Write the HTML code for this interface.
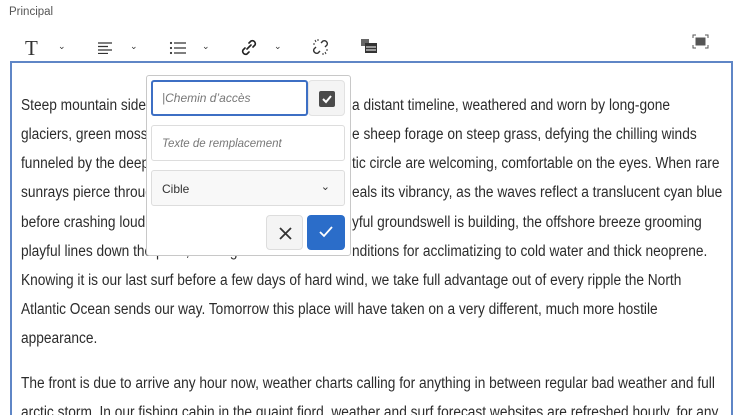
<!DOCTYPE html>
<html><head><style>
html,body{margin:0;width:750px;height:415px;overflow:hidden}
body{background:#fff;font-family:"Liberation Sans",sans-serif;position:relative}
.lbl{position:absolute;left:9px;top:6px;font-size:11.5px;color:#555}
.ed{position:absolute;left:10px;top:61px;width:723px;height:365px;border:2px solid #5f86c6;box-sizing:border-box}
.l{position:absolute;left:21px;white-space:nowrap;font-size:15.5px;color:#2c2c2c;transform:scaleX(0.885);transform-origin:0 50%;line-height:20px}
.r{left:352px;background:#fff}
.tb{position:absolute;top:36px;font-size:12px;color:#333}
.pop{position:absolute;left:146px;top:75px;width:205px;height:181px;background:#fff;border:1.5px solid #c8c8c8;border-radius:3px;box-sizing:border-box}
.in{position:absolute;background:#fff;border:1px solid #ddd;border-radius:3px;box-sizing:border-box;font-style:italic;font-size:12px;color:#777}
.btn{position:absolute;border-radius:4px;box-sizing:border-box}
</style></head><body>
<div class="lbl">Principal</div>
<div class="tb" style="left:25px;top:36px;font-family:'Liberation Serif',serif;font-size:21px">T</div>
<div class="tb" style="left:58px;top:41px;font-size:9px">⌄</div>
<svg class="tb" style="left:97px;top:42px" width="16" height="12"><path d="M1 1h14M1 4.5h10M1 8h14M1 11.5h10" stroke="#333" stroke-width="1.3"/></svg>
<div class="tb" style="left:130px;top:41px;font-size:9px">⌄</div>
<svg class="tb" style="left:169px;top:41px" width="18" height="14"><path d="M5 2h12M5 7h12M5 12h12" stroke="#333" stroke-width="1.3"/><circle cx="2" cy="2" r="1.1" fill="#333"/><circle cx="2" cy="7" r="1.1" fill="#333"/><circle cx="2" cy="12" r="1.1" fill="#333"/></svg>
<div class="tb" style="left:202px;top:41px;font-size:9px">⌄</div>
<svg class="tb" style="left:240px;top:39px" width="18" height="17"><path d="M7 10l4-4M9 4l2-2a3 3 0 0 1 4 4l-2 2M9 13l-2 2a3 3 0 0 1-4-4l2-2" stroke="#222" stroke-width="1.6" fill="none" stroke-linecap="round"/></svg>
<div class="tb" style="left:274px;top:41px;font-size:9px">⌄</div>
<svg class="tb" style="left:312px;top:38px" width="18" height="18"><path d="M9 5l2-2a3 3 0 0 1 4 4l-2 2M8 13l-2 2a3 3 0 0 1-4-4l2-2" stroke="#333" stroke-width="1.4" fill="none"/><path d="M3 2l1 2M6 1v2M1 6h2M14 16l-1-2M11 17v-2M16 12h-2" stroke="#333" stroke-width="1"/></svg>
<svg class="tb" style="left:360px;top:38px" width="18" height="16"><rect x="1" y="1" width="8" height="7" fill="#666"/><rect x="5" y="5" width="12" height="10" fill="#333"/><path d="M6 9h10M6 12h10" stroke="#fff"/></svg>
<svg class="tb" style="left:692px;top:34px" width="17" height="15"><path d="M1 4V1h3M13 1h3v3M16 11v3h-3M4 14H1v-3" stroke="#555" fill="none"/><rect x="3.5" y="3.5" width="10" height="8" fill="#555"/></svg>
<div class="ed"></div>
<div class="l" style="top:96px">Steep mountain sides rising up from the sea,</div>
<div class="l r" style="top:96px">a distant timeline, weathered and worn by long-gone</div>
<div class="l" style="top:125px">glaciers, green moss covers the rocks and th</div>
<div class="l r" style="top:125px">e sheep forage on steep grass, defying the chilling winds</div>
<div class="l" style="top:154px">funneled by the deep fjord. The tones of the arc</div>
<div class="l r" style="top:154px">tic circle are welcoming, comfortable on the eyes. When rare</div>
<div class="l" style="top:183px">sunrays pierce through the clouds, the sea rev</div>
<div class="l r" style="top:183px">eals its vibrancy, as the waves reflect a translucent cyan blue</div>
<div class="l" style="top:213px">before crashing loudly on the shore. The pla</div>
<div class="l r" style="top:213px">yful groundswell is building, the offshore breeze grooming</div>
<div class="l" style="top:242px">playful lines down the point, making ideal co</div>
<div class="l r" style="top:242px">nditions for acclimatizing to cold water and thick neoprene.</div>
<div class="l" style="top:271px">Knowing it is our last surf before a few days of hard wind, we take full advantage out of every ripple the North</div>
<div class="l" style="top:300px">Atlantic Ocean sends our way. Tomorrow this place will have taken on a very different, much more hostile</div>
<div class="l" style="top:329px">appearance.</div>
<div class="l" style="top:374px">The front is due to arrive any hour now, weather charts calling for anything in between regular bad weather and full</div>
<div class="l" style="top:403px">arctic storm. In our fishing cabin in the quaint fjord, weather and surf forecast websites are refreshed hourly, for any</div>
<div class="pop"></div>
<div class="in" style="left:151px;top:80px;width:157px;height:36px;border:2px solid #3d6fc4;padding:9px 0 0 9px">|Chemin d’accès</div>
<div class="btn" style="left:308px;top:80px;width:37px;height:36px;background:#f4f4f4;border:1px solid #e2e2e2"><svg style="position:absolute;left:10px;top:10px" width="16" height="16"><rect width="16" height="16" rx="2" fill="#4b4b4b"/><path d="M4 8l3 3 5-6" stroke="#fff" stroke-width="2" fill="none"/></svg></div>
<div class="in" style="left:151px;top:125px;width:194px;height:36px;padding:12px 0 0 10px;font-size:11.5px">Texte de remplacement</div>
<div class="in" style="left:151px;top:170px;width:194px;height:36px;background:#f8f8f8;padding:11px 0 0 10px;font-style:normal;color:#333">Cible<span style="position:absolute;right:14px;top:9px;font-size:11px">⌄</span></div>
<div class="btn" style="left:266px;top:215px;width:37px;height:35px;background:#f4f4f4;border:1px solid #ddd"><svg style="position:absolute;left:12px;top:11px" width="13" height="13"><path d="M1 1l11 11M12 1L1 12" stroke="#333" stroke-width="1.8"/></svg></div>
<div class="btn" style="left:307px;top:215px;width:38px;height:35px;background:#2b6dc9"><svg style="position:absolute;left:12px;top:11px" width="14" height="12"><path d="M1 6l4 4 8-9" stroke="#fff" stroke-width="1.8" fill="none"/></svg></div>
</body></html>
